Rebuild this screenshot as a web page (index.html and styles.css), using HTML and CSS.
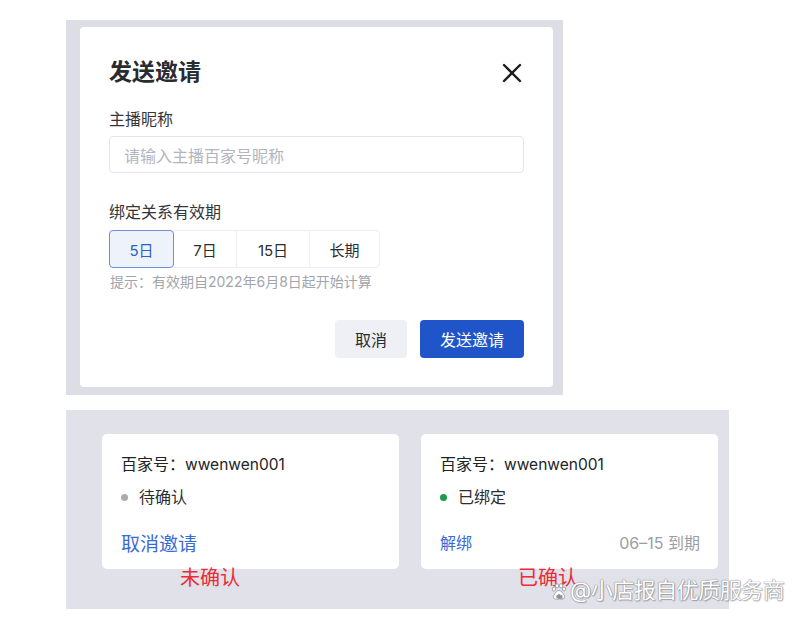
FILE: index.html
```html
<!DOCTYPE html>
<html lang="zh-CN">
<head>
<meta charset="utf-8">
<title>发送邀请</title>
<link rel="stylesheet" href="styles.css">
</head>
<body>
<div class="page">
  <section class="top-panel">
    <div class="dialog">
      <div class="dialog-head">
        <h1 class="dialog-title">发送邀请</h1>
        <span class="close" aria-label="关闭">
          <svg width="20" height="20" viewBox="0 0 20 20"><path d="M2 2L18 18M18 2L2 18" stroke="#1c1c1e" stroke-width="2.4" stroke-linecap="round" fill="none"/></svg>
        </span>
      </div>
      <label class="field-label">主播昵称</label>
      <div class="input">请输入主播百家号昵称</div>
      <label class="field-label label-gap">绑定关系有效期</label>
      <div class="segments">
        <span class="seg seg-5 active">5日</span>
        <span class="seg seg-7">7日</span>
        <span class="seg seg-15">15日</span>
        <span class="seg seg-long">长期</span>
      </div>
      <p class="hint">提示：有效期自2022年6月8日起开始计算</p>
      <div class="actions">
        <button class="btn btn-cancel">取消</button>
        <button class="btn btn-primary">发送邀请</button>
      </div>
    </div>
  </section>

  <section class="bottom-panel">
    <div class="col">
      <div class="card">
        <div class="card-name">百家号：<span class="latin">wwenwen001</span></div>
        <div class="status"><span class="dot dot-gray"></span>待确认</div>
        <div class="card-foot"><a class="link link-lg">取消邀请</a></div>
      </div>
      <div class="note note-1">未确认</div>
    </div>
    <div class="col">
      <div class="card">
        <div class="card-name">百家号：<span class="latin">wwenwen001</span></div>
        <div class="status"><span class="dot dot-green"></span>已绑定</div>
        <div class="card-foot"><a class="link">解绑</a><span class="expire">06–15 到期</span></div>
      </div>
      <div class="note note-2">已确认</div>
    </div>
  </section>

  <div class="watermark">
    <svg class="paw" width="16" height="17" viewBox="0 0 16 17">
      <g fill="#ffffff" stroke="#9a9ca2" stroke-width="0.9">
        <ellipse cx="3" cy="6" rx="1.7" ry="2.1"/>
        <ellipse cx="6" cy="2.8" rx="1.7" ry="2.1"/>
        <ellipse cx="10" cy="2.8" rx="1.7" ry="2.1"/>
        <ellipse cx="13" cy="6" rx="1.7" ry="2.1"/>
        <path d="M8 7.5C5.5 7.5 4 10.5 2.8 12.3C1.8 13.8 2.6 16.2 5 16.2C6.3 16.2 7 15.8 8 15.8C9 15.8 9.7 16.2 11 16.2C13.4 16.2 14.2 13.8 13.2 12.3C12 10.5 10.5 7.5 8 7.5Z"/>
      </g>
      <text x="8" y="14.6" text-anchor="middle" font-family="Liberation Sans, sans-serif" font-size="5" font-weight="bold" fill="#8e9096">du</text>
    </svg>
    <span>@小店报自优质服务商</span>
  </div>
</div>
</body>
</html>
```

FILE: styles.css
```css
* { box-sizing: border-box; }

html, body {
  margin: 0;
  padding: 0;
  background: #ffffff;
}

body {
  font-family: "Inter", "Noto Sans CJK SC", "Noto Sans", sans-serif;
  color: #222326;
}

.page {
  position: relative;
  width: 800px;
  height: 619px;
  padding: 20px 0 0 66px;
}

/* ---------- top panel ---------- */
.top-panel {
  width: 497px;
  height: 375px;
  background: #dcdde5;
  padding: 7px 10px 8px 14px;
}

.dialog {
  width: 473px;
  height: 360px;
  background: #ffffff;
  border-radius: 4px;
  padding: 29px 29px 28px 29px;
  display: flex;
  flex-direction: column;
}

.dialog-head {
  display: flex;
  align-items: center;
  justify-content: space-between;
  height: 32px;
}

.dialog-title {
  margin: 0;
  font-size: 23px;
  line-height: 32px;
  font-weight: 700;
  color: #2a2b2f;
}

.close {
  display: flex;
  width: 20px;
  height: 20px;
  margin-right: 2px;
  margin-top: 1px;
}

.field-label {
  display: block;
  margin-top: 19px;
  font-size: 16px;
  line-height: 24px;
  color: #34353a;
}

.label-gap { margin-top: 27px; }

.input {
  margin-top: 5px;
  width: 415px;
  height: 37px;
  border: 1px solid #e3e5ea;
  border-radius: 4px;
  padding: 0 14px;
  display: flex;
  align-items: center;
  font-size: 16px;
  color: #b3b5bc;
}

.segments {
  margin-top: 6px;
  display: flex;
  align-self: flex-start;
  height: 38px;
}

.seg {
  display: flex;
  align-items: center;
  justify-content: center;
  font-size: 15px;
  color: #2c2d31;
  border: 1px solid #eceef2;
  margin-left: -1px;
}

.seg-5 { width: 65px; }
.seg-7 { width: 64px; }
.seg-15 { width: 74px; }
.seg-long { width: 71px; }

.seg:first-child {
  margin-left: 0;
  border-radius: 4px 0 0 4px;
}

.seg:last-child { border-radius: 0 4px 4px 0; }

.seg.active {
  background: #edf2fb;
  border-color: #6f8fd2;
  color: #2f5fc4;
  border-radius: 4px;
  position: relative;
  z-index: 1;
}

.hint {
  margin: 4px 0 0 1px;
  font-size: 14px;
  line-height: 19px;
  color: #a2a5ac;
}

.actions {
  margin-top: 29px;
  display: flex;
  justify-content: flex-end;
  gap: 13px;
}

.btn {
  height: 38px;
  border: none;
  border-radius: 4px;
  font-family: inherit;
  font-size: 16px;
  padding: 0;
}

.btn-cancel {
  width: 72px;
  background: #eef0f5;
  color: #2a2b2f;
}

.btn-primary {
  width: 104px;
  background: #1f55c9;
  color: #ffffff;
}

/* ---------- bottom panel ---------- */
.bottom-panel {
  margin-top: 15px;
  width: 663px;
  height: 199px;
  background: #e1e2e9;
  padding: 24px 0 0 36px;
  display: flex;
  gap: 22px;
}

.col {
  width: 297px;
  display: flex;
  flex-direction: column;
}

.card {
  height: 135px;
  background: #ffffff;
  border-radius: 5px;
  padding: 19px 18px 16px 19px;
  display: flex;
  flex-direction: column;
}

.card-name {
  font-size: 16px;
  line-height: 22px;
  color: #222326;
}

.latin { font-size: 15.5px; }

.status {
  margin-top: 10px;
  display: flex;
  align-items: center;
  font-size: 16px;
  line-height: 22px;
  color: #2c2d31;
}

.dot {
  width: 7px;
  height: 7px;
  border-radius: 50%;
  margin: 0 11px 0 0;
}

.dot-gray { background: #a9acb5; }
.dot-green { background: #1f9a4a; }

.card-foot {
  margin-top: 22px;
  height: 24px;
  display: flex;
  align-items: center;
  justify-content: space-between;
}

.link {
  font-size: 16px;
  color: #3a6bd4;
}

.link-lg { font-size: 19px; }

.expire {
  font-size: 16px;
  color: #9b9da4;
}

.note {
  margin-top: -2px;
  font-size: 20px;
  line-height: 22px;
  color: #ec2b34;
}

.note-1 { padding-left: 78px; }
.note-2 { padding-left: 97px; }

/* ---------- watermark overlay ---------- */
.watermark {
  position: absolute;
  left: 551px;
  top: 577px;
  display: flex;
  align-items: center;
  gap: 3px;
  font-size: 22px;
  line-height: 26px;
  color: #ffffff;
  text-shadow: 0 0 1px #7d7f85, 0 0 1px #7d7f85, 1px 1px 1px rgba(0,0,0,0.25);
  letter-spacing: -0.5px;
}

.paw { margin-top: 3px; }
```
